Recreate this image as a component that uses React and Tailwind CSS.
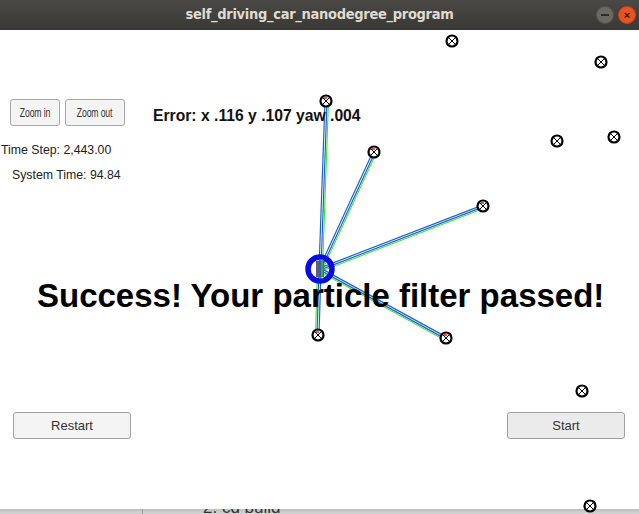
import React from "react";

const landmarks = [
  [452, 41], [601, 62], [557, 141], [614, 137], [374, 152], [326, 101],
  [483, 206], [318, 335], [446, 338], [582, 391], [590, 506],
];
const observed = [[326, 101], [374, 152], [483, 206], [318, 335], [446, 338]];
const car = [320, 269];

function Landmark({ x, y }) {
  return (
    <g>
      <circle cx={x} cy={y} r="5.5" fill="white" stroke="black" strokeWidth="2.2" />
      <line x1={x - 3} y1={y - 3} x2={x + 3} y2={y + 3} stroke="black" strokeWidth="1" />
      <line x1={x - 3} y1={y + 3} x2={x + 3} y2={y - 3} stroke="black" strokeWidth="1" />
    </g>
  );
}

function Canvas() {
  return (
    <svg className="absolute left-0 top-0" width="639" height="484" viewBox="0 30 639 484">
      {observed.map(([x, y], i) => {
        const dx = x - car[0];
        const dy = y - car[1];
        const len = Math.hypot(dx, dy);
        const nx = -dy / len;
        const ny = dx / len;
        return (
          <g key={i}>
            <line x1={car[0] - nx} y1={car[1] - ny} x2={x - nx} y2={y - ny} stroke="#2063c8" strokeWidth="1.2" />
            <line x1={car[0] + nx} y1={car[1] + ny} x2={x + nx} y2={y + ny} stroke="#2063c8" strokeWidth="1.2" />
            <line x1={car[0] + 2.5 * nx} y1={car[1] + 2.5 * ny} x2={x + 2.5 * nx} y2={y + 2.5 * ny} stroke="#22ee22" strokeWidth="1" />
          </g>
        );
      })}
      {landmarks.map(([x, y], i) => (
        <Landmark key={i} x={x} y={y} />
      ))}
      {observed.map(([x, y], i) => (
        <line key={"r" + i} x1={x - 2} y1={y - 3} x2={x + 1} y2={y - 3} stroke="#ee1111" strokeWidth="1.5" />
      ))}
      <circle cx={car[0]} cy={car[1]} r="12" fill="none" stroke="#0a0ae6" strokeWidth="5.5" />
      <rect x="316" y="261" width="8" height="16" fill="#5c5c78" />
      <line x1={car[0]} y1={car[1] - 10} x2={car[0]} y2={car[1] + 10} stroke="#2063c8" strokeWidth="1.5" />
      <line x1={car[0] + 2} y1={car[1] - 10} x2={car[0] + 2} y2={car[1] + 10} stroke="#22ee22" strokeWidth="1" />
    </svg>
  );
}

export default function App() {
  const sans = { fontFamily: '"Liberation Sans", Arial, sans-serif' };
  return (
    <div className="w-[639px] h-[514px] overflow-hidden bg-white flex flex-col" style={sans}>
      <div className="h-[30px] shrink-0 bg-gradient-to-b from-[#4a4945] to-[#393834] flex items-center justify-center relative">
        <span className="text-[#dfdbd2] text-[14.5px] font-bold tracking-[-0.3px]" style={{ fontFamily: '"DejaVu Sans Condensed", "DejaVu Sans", sans-serif' }}>
          self_driving_car_nanodegree_program
        </span>
        <div className="absolute right-[3px] top-[6px] flex gap-[4px]">
          <div className="w-[18px] h-[18px] rounded-full bg-[#6a6964] border border-[#55544f] flex items-center justify-center">
            <div className="w-[8px] h-[1.5px] bg-[#2e2d2a]" />
          </div>
          <div className="w-[18px] h-[18px] rounded-full bg-[#e9531f] border border-[#c4441a] flex items-center justify-center text-[#3a1a0a] text-[11px] font-bold leading-none">
            ×
          </div>
        </div>
      </div>
      <div className="relative flex-1">
        <Canvas />
        <div className="absolute left-[10px] top-[69px] flex gap-[5px]">
          <button className="w-[50px] h-[27px] rounded-[3px] border border-[#a8a8a8] bg-[#f4f4f4] text-[#333] text-[12px] flex items-center justify-center">
            <span className="scale-x-[0.72] tracking-[-0.2px] whitespace-nowrap">Zoom in</span>
          </button>
          <button className="w-[60px] h-[27px] rounded-[3px] border border-[#a8a8a8] bg-[#f4f4f4] text-[#333] text-[12px] flex items-center justify-center">
            <span className="scale-x-[0.72] tracking-[-0.2px] whitespace-nowrap">Zoom out</span>
          </button>
        </div>
        <div className="absolute left-[153px] top-[78px] text-[15.7px] font-bold text-[#111] leading-none">
          Error: x .116 y .107 yaw .004
        </div>
        <div className="absolute left-[1px] top-[114px] text-[12.3px] text-[#222] leading-none">Time Step: 2,443.00</div>
        <div className="absolute left-[12px] top-[139px] text-[12.3px] text-[#222] leading-none">System Time: 94.84</div>
        <div className="absolute left-[37px] top-[249px] text-[33px] font-bold text-black leading-none whitespace-nowrap">
          Success! Your particle filter passed!
        </div>
        <button className="absolute left-[13px] top-[382px] w-[118px] h-[27px] rounded-[3px] border border-[#a0a0a0] bg-[#f4f4f4] text-[#333] text-[13px]">
          Restart
        </button>
        <button className="absolute left-[507px] top-[382px] w-[118px] h-[27px] rounded-[3px] border border-[#a0a0a0] bg-[#ebebeb] text-[#333] text-[13px]">
          Start
        </button>
      </div>
      <div className="h-[5px] shrink-0 bg-gradient-to-b from-[#bdbdbd] to-[#d6d6d6] flex overflow-hidden">
        <div className="w-[143px] shrink-0 border-r border-[#9a9a9a]" />
        <div className="pl-[60px] text-[17px] text-[#333] leading-none -mt-[10px]">2. cd build</div>
      </div>
    </div>
  );
}
